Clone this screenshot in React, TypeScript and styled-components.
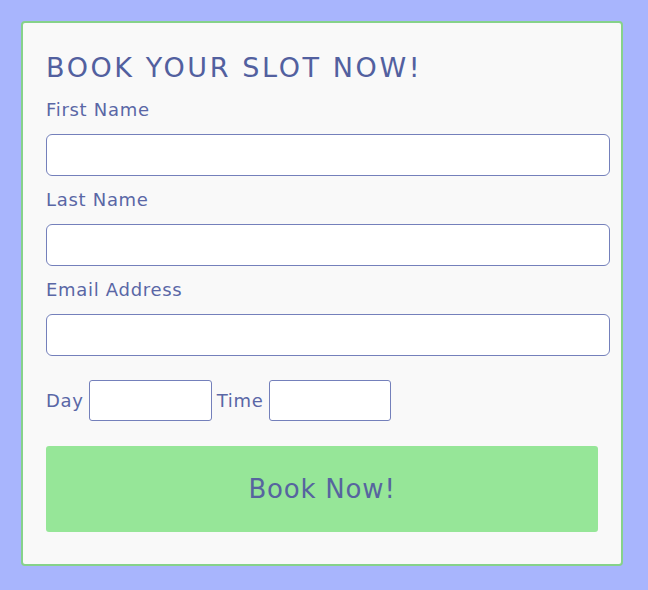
import React from "react";
import styled, { createGlobalStyle } from "styled-components";

const Global = createGlobalStyle`
  html, body { margin: 0; padding: 0; background: #a8b5fd; }
  body { font-family: "DejaVu Sans", "Open Sans", sans-serif; }
  * { box-sizing: content-box; }
`;

const Page = styled.div`
  width: 648px;
  height: 590px;
  padding: 21px;
  box-sizing: border-box;
  background: #a8b5fd;
`;

const Card = styled.form`
  width: 552px;
  background: #f9f9f9;
  border: 2px solid #86d28a;
  border-radius: 4px;
  padding: 28px 23px 32px 23px;
  display: flex;
  flex-direction: column;
  color: #5a67a6;
`;

const Title = styled.h1`
  margin: 0 0 13px;
  font-size: 27px;
  font-weight: 400;
  line-height: 34px;
  letter-spacing: 2.6px;
  color: #52609f;
`;

const Field = styled.div`
  display: flex;
  flex-direction: column;
  margin-bottom: 12px;
`;

const Label = styled.label<{ $inline?: boolean }>`
  font-size: 18px;
  line-height: 24px;
  letter-spacing: 0.7px;
  margin-bottom: ${(p) => (p.$inline ? 0 : 12)}px;
  color: #5a67a6;
`;

const TextInput = styled.input`
  width: 100%;
  height: 30px;
  padding: 5px;
  border: 1px solid #7480bb;
  border-radius: 6px;
  background: #fff;
  font: inherit;
  margin: 0;
`;

const Row = styled.div`
  display: flex;
  align-items: center;
  margin-top: 12px;
  gap: 5px;
`;

const SmallInput = styled.input<{ $w: number }>`
  width: ${(p) => p.$w}px;
  height: 29px;
  padding: 5px;
  border: 1px solid #7480bb;
  border-radius: 3px;
  background: #fff;
  margin: 0;
`;

const Button = styled.button`
  margin-top: 25px;
  height: 86px;
  width: 100%;
  padding: 0;
  border: none;
  border-radius: 3px;
  background: #96e698;
  color: #56649f;
  font-family: inherit;
  font-size: 26px;
  letter-spacing: 0.8px;
  cursor: pointer;
`;

export default function App() {
  return (
    <>
      <Global />
      <Page>
        <Card onSubmit={(e) => e.preventDefault()}>
          <Title>BOOK YOUR SLOT NOW!</Title>
          <Field>
            <Label>First Name</Label>
            <TextInput type="text" />
          </Field>
          <Field>
            <Label>Last Name</Label>
            <TextInput type="text" />
          </Field>
          <Field>
            <Label>Email Address</Label>
            <TextInput type="email" />
          </Field>
          <Row>
            <Label as="span" $inline>Day</Label>
            <SmallInput $w={111} />
            <Label as="span" $inline>Time</Label>
            <SmallInput $w={110} />
          </Row>
          <Button type="submit">Book Now!</Button>
        </Card>
      </Page>
    </>
  );
}
